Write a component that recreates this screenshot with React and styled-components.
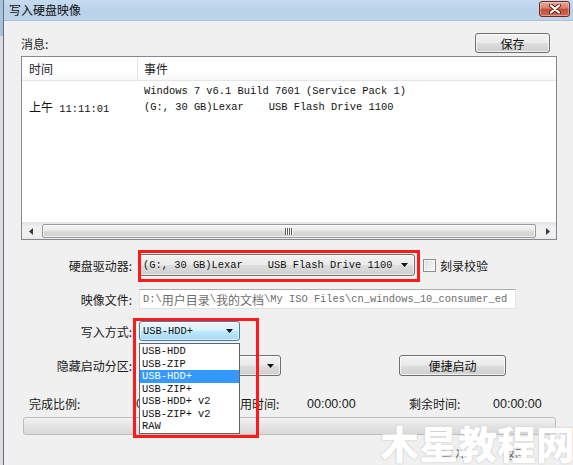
import React from 'react';
import styled, { createGlobalStyle } from 'styled-components';

const Global = createGlobalStyle`
  html, body { margin: 0; padding: 0; background: #f0f0f0; }
  body {
    font-family: "Noto Sans CJK SC", "Noto Sans", sans-serif;
    font-size: 12px;
    color: #000;
    overflow: hidden;
  }
  * { box-sizing: border-box; }
`;

const MONO = `"Liberation Mono", "Noto Sans CJK SC", monospace`;
const CJK = `"Noto Sans CJK SC", "Noto Sans", sans-serif`;

const Screen = styled.div`
  width: 573px;
  height: 465px;
  display: flex;
  overflow: hidden;
  position: relative;
  background: #f0f0f0;
`;

const BackStrip = styled.div`
  width: 4px;
  flex: none;
  background: linear-gradient(#a8c2de 0 36px, #dadde2 36px);
  border-right: 1px solid #6b6f75;
`;

const Win = styled.div`
  flex: 1;
  min-width: 0;
  display: flex;
  flex-direction: column;
`;

const TitleBar = styled.div`
  height: 21px;
  flex: none;
  display: flex;
  align-items: center;
  justify-content: space-between;
  padding: 0 3px 0 5px;
  background: linear-gradient(#c6dbf0, #bad2ea 55%, #bfd5eb);
  border-bottom: 1px solid #aac0d6;
`;

const Title = styled.span`
  font-family: ${CJK};
  font-size: 12px;
  color: #111;
  line-height: 1;
  margin-top: -1px;
`;

const CloseBtn = styled.div`
  width: 31px;
  height: 16px;
  margin-top: -2px;
  border: 1px solid #6e2a20;
  border-radius: 3px;
  background: linear-gradient(#eaa898, #d4806e 45%, #c24d38 50%, #cf6a55);
  display: flex;
  align-items: center;
  justify-content: center;
  box-shadow: inset 0 0 0 1px rgba(255, 255, 255, 0.35);
`;

const Body = styled.div`
  flex: 1;
  position: relative;
  display: flex;
  flex-direction: column;
  padding: 12px 16px 0 17px;
  background: #f0f0f0;
`;

const TopRow = styled.div`
  height: 20px;
  display: flex;
  align-items: center;
  justify-content: space-between;
  padding-right: 7px;
`;

const Label = styled.span`
  font-family: ${CJK};
  font-size: 12px;
  color: #1a1a1a;
  white-space: nowrap;
`;

const Button = styled.div`
  width: ${(p) => p.$w}px;
  height: ${(p) => p.$h || 20}px;
  border: 1px solid #707070;
  border-radius: 3px;
  background: linear-gradient(#f2f2f2, #ebebeb 48%, #dddddd 52%, #cfcfcf);
  box-shadow: inset 0 0 0 1px rgba(255, 255, 255, 0.7);
  display: flex;
  align-items: center;
  justify-content: center;
  font-family: ${CJK};
  font-size: 12px;
  color: #111;
  margin-left: ${(p) => p.$ml || 0}px;
`;

const ListBox = styled.div`
  margin-top: 3px;
  height: 184px;
  border: 1px solid #828790;
  background: #fff;
  display: flex;
  flex-direction: column;
`;

const ListHeader = styled.div`
  height: 24px;
  flex: none;
  display: grid;
  grid-template-columns: 116px 1fr;
  border-bottom: 1px solid #e5e5e5;
  background: linear-gradient(#ffffff, #ffffff 60%, #f7f8fa);
`;

const HeadCell = styled.div`
  display: flex;
  align-items: center;
  padding-left: ${(p) => p.$pl}px;
  font-family: ${CJK};
  font-size: 12px;
  color: #222;
  border-right: ${(p) => (p.$divider ? '1px solid #e3e5e8' : 'none')};
`;

const ListContent = styled.div`
  flex: 1;
  display: grid;
  grid-template-columns: 116px 1fr;
  align-content: start;
  padding-top: 2px;
`;

const Cell = styled.div`
  font-family: ${MONO};
  font-size: 10.4px;
  line-height: 16px;
  color: #111;
  white-space: pre;
  padding-left: ${(p) => p.$pl}px;
  padding-top: ${(p) => p.$pt || 0}px;
`;

const Wide = styled.span`
  font-family: ${CJK};
  font-size: 12px;
`;

const HScroll = styled.div`
  height: 17px;
  flex: none;
  display: flex;
  align-items: stretch;
  background: linear-gradient(#e3e3e3, #f0f0f0 20%, #f0f0f0 80%, #e8e8e8);
  border-top: 1px solid #e6e6e6;
`;

const ScrollArrow = styled.div`
  width: 17px;
  flex: none;
  display: flex;
  align-items: center;
  justify-content: center;
`;

const Thumb = styled.div`
  flex: 1;
  margin: 1px 3px;
  border: 1px solid #9a9a9a;
  border-radius: 2px;
  background: linear-gradient(#f5f5f5, #e9e9e9 45%, #d9d9d9 55%, #d2d2d2);
  box-shadow: inset 0 0 0 1px rgba(255, 255, 255, 0.6);
  display: flex;
  align-items: center;
  justify-content: center;
`;

const FormRow = styled.div`
  margin-top: ${(p) => p.$mt}px;
  height: ${(p) => p.$h}px;
  display: flex;
  align-items: center;
`;

const FormLabel = styled(Label)`
  width: 111px;
  flex: none;
  text-align: right;
  margin-right: 7px;
`;

const Combo = styled.div`
  width: ${(p) => p.$w}px;
  height: 100%;
  flex: none;
  border: 1px solid ${(p) => (p.$focus ? '#3c7fb1' : '#707070')};
  border-radius: 3px;
  background: ${(p) =>
    p.$focus
      ? 'linear-gradient(#eaf6fd, #d9f0fc 48%, #bee6fd 52%, #a7d9f5)'
      : 'linear-gradient(#f2f2f2, #ebebeb 48%, #dddddd 52%, #cfcfcf)'};
  box-shadow: inset 0 0 0 1px rgba(255, 255, 255, 0.6);
  display: flex;
  align-items: center;
  justify-content: space-between;
  padding: 0 6px 0 3px;
  font-family: ${MONO};
  font-size: 10.4px;
  color: #111;
  white-space: pre;
`;

const Check = styled.div`
  width: 13px;
  height: 13px;
  margin-left: 8px;
  margin-right: 4px;
  border: 1px solid #8e8f8f;
  background: linear-gradient(135deg, #dcdcdc, #fbfbfb);
  box-shadow: inset 0 0 0 1px #f4f4f4;
`;

const TextField = styled.div`
  width: 377px;
  height: 100%;
  border: 1px solid #e2e3ea;
  border-top-color: #abadb3;
  background: #fff;
  display: flex;
  align-items: center;
  padding-left: 3px;
  overflow: hidden;
  font-family: ${MONO};
  font-size: 10.4px;
  color: #6d6d6d;
  white-space: pre;
`;

const StatsRow = styled.div`
  margin-top: 19px;
  height: 14px;
  display: grid;
  grid-template-columns: 107px 92px 79px 102px 84px auto;
  padding-left: 8px;
  align-items: center;
`;

const Stat = styled.span`
  font-family: ${(p) => (p.$num ? `"Liberation Sans", Arial, sans-serif` : CJK)};
  font-size: ${(p) => (p.$num ? 12.5 : 12)}px;
  color: #1a1a1a;
  white-space: nowrap;
`;

const Progress = styled.div`
  margin: 8px 1px 0 2px;
  height: 18px;
  border: 1px solid #bcbcbc;
  border-radius: 3px;
  background: linear-gradient(#f3f3f3, #e4e4e4 50%, #d9d9d9);
`;

const BottomRow = styled.div`
  margin-top: 10px;
  height: 20px;
  display: flex;
  justify-content: flex-end;
  gap: 38px;
  padding-right: 30px;
`;

const FaintText = styled.span`
  font-family: ${CJK};
  font-size: 12px;
  color: #333;
  opacity: 0.8;
`;

const Dropdown = styled.div`
  position: absolute;
  left: 135px;
  top: 322px;
  width: 101px;
  height: 91px;
  background: #fff;
  border: 1px solid #646464;
  padding-top: 1px;
  z-index: 2;
`;

const Option = styled.div`
  height: 12.5px;
  line-height: 12.5px;
  padding-left: 2px;
  font-family: ${MONO};
  font-size: 10.4px;
  white-space: pre;
  color: ${(p) => (p.$sel ? '#fff' : '#111')};
  background: ${(p) => (p.$sel ? '#3399ff' : 'transparent')};
`;

const RedBox = styled.div`
  position: absolute;
  left: ${(p) => p.$x}px;
  top: ${(p) => p.$y}px;
  width: ${(p) => p.$w}px;
  height: ${(p) => p.$h}px;
  border: 3px solid #ff1a1a;
  z-index: 3;
  pointer-events: none;
`;

const Watermark = styled.div`
  position: absolute;
  left: 380px;
  top: 423px;
  font-family: ${CJK};
  font-weight: 900;
  font-size: 39px;
  line-height: 1;
  color: #ffffff;
  letter-spacing: 0;
  white-space: nowrap;
  text-shadow: 0 0 1px #b8b8b8, 0 0 2px #d0d0d0;
  z-index: 5;
`;

const DownArrow = () => (
  <svg width="7" height="4" viewBox="0 0 7 4">
    <path d="M0 0 H7 L3.5 4 Z" fill="#111" />
  </svg>
);

const SideArrow = ({ dir }) => (
  <svg width="4" height="7" viewBox="0 0 4 7">
    {dir === 'left' ? (
      <path d="M4 0 V7 L0 3.5 Z" fill="#3a3a3a" />
    ) : (
      <path d="M0 0 V7 L4 3.5 Z" fill="#3a3a3a" />
    )}
  </svg>
);

const Grip = () => (
  <svg width="8" height="7" viewBox="0 0 8 7">
    {[0, 2, 4, 6].map((x) => (
      <rect key={x} x={x} y="0" width="1" height="7" fill="#5a5a5a" />
    ))}
    {[1, 3, 5, 7].map((x) => (
      <rect key={x} x={x} y="0" width="1" height="7" fill="#ffffff" />
    ))}
  </svg>
);

const CloseX = () => (
  <svg width="14" height="10" viewBox="0 0 14 10">
    <path d="M3 1.5 L11 8.5 M11 1.5 L3 8.5" stroke="#5a1d14" strokeWidth="4" strokeLinecap="round" />
    <path d="M3 1.5 L11 8.5 M11 1.5 L3 8.5" stroke="#ffffff" strokeWidth="2.2" strokeLinecap="round" />
  </svg>
);

const modes = ['USB-HDD', 'USB-ZIP', 'USB-HDD+', 'USB-ZIP+', 'USB-HDD+ v2', 'USB-ZIP+ v2', 'RAW'];

export default function App() {
  return (
    <Screen>
      <Global />
      <BackStrip />
      <Win>
        <TitleBar>
          <Title>写入硬盘映像</Title>
          <CloseBtn>
            <CloseX />
          </CloseBtn>
        </TitleBar>
        <Body>
          <TopRow>
            <Label>消息:</Label>
            <Button $w={75}>保存</Button>
          </TopRow>

          <ListBox>
            <ListHeader>
              <HeadCell $pl={7} $divider>时间</HeadCell>
              <HeadCell $pl={6}>事件</HeadCell>
            </ListHeader>
            <ListContent>
              <Cell $pl={7} $pt={16}>
                <Wide>上午</Wide> 11:11:01
              </Cell>
              <Cell $pl={6}>
                {'Windows 7 v6.1 Build 7601 (Service Pack 1)\n(G:, 30 GB)Lexar    USB Flash Drive 1100'}
              </Cell>
            </ListContent>
            <HScroll>
              <ScrollArrow>
                <SideArrow dir="left" />
              </ScrollArrow>
              <Thumb>
                <Grip />
              </Thumb>
              <ScrollArrow>
                <SideArrow dir="right" />
              </ScrollArrow>
            </HScroll>
          </ListBox>

          <FormRow $mt={14} $h={22}>
            <FormLabel>硬盘驱动器:</FormLabel>
            <Combo $w={276}>
              <span>{'(G:, 30 GB)Lexar    USB Flash Drive 1100'}</span>
              <DownArrow />
            </Combo>
            <Check />
            <Label>刻录校验</Label>
          </FormRow>

          <FormRow $mt={13} $h={20}>
            <FormLabel>映像文件:</FormLabel>
            <TextField>
              D:\<Wide>用户目录</Wide>\<Wide>我的文档</Wide>\My ISO Files\cn_windows_10_consumer_ed
            </TextField>
          </FormRow>

          <FormRow $mt={12} $h={20}>
            <FormLabel>写入方式:</FormLabel>
            <Combo $w={101} $focus>
              <span>USB-HDD+</span>
              <DownArrow />
            </Combo>
          </FormRow>

          <FormRow $mt={14} $h={21}>
            <FormLabel>隐藏启动分区:</FormLabel>
            <Combo $w={142}>
              <span>无</span>
              <DownArrow />
            </Combo>
            <Button $w={107} $h={21} $ml={118}>便捷启动</Button>
          </FormRow>

          <StatsRow>
            <Stat>完成比例:</Stat>
            <Stat $num>0%</Stat>
            <Stat>已用时间:</Stat>
            <Stat $num>00:00:00</Stat>
            <Stat>剩余时间:</Stat>
            <Stat $num>00:00:00</Stat>
          </StatsRow>

          <Progress />

          <BottomRow>
            <FaintText>写入</FaintText>
            <FaintText>返回</FaintText>
          </BottomRow>

          <Dropdown>
            {modes.map((m) => (
              <Option key={m} $sel={m === 'USB-HDD+'}>
                {m}
              </Option>
            ))}
          </Dropdown>

          <RedBox $x={134} $y={229} $w={282} $h={32} />
          <RedBox $x={129} $y={297} $w={126} $h={120} />
        </Body>
      </Win>
      <Watermark>木星教程网</Watermark>
    </Screen>
  );
}
